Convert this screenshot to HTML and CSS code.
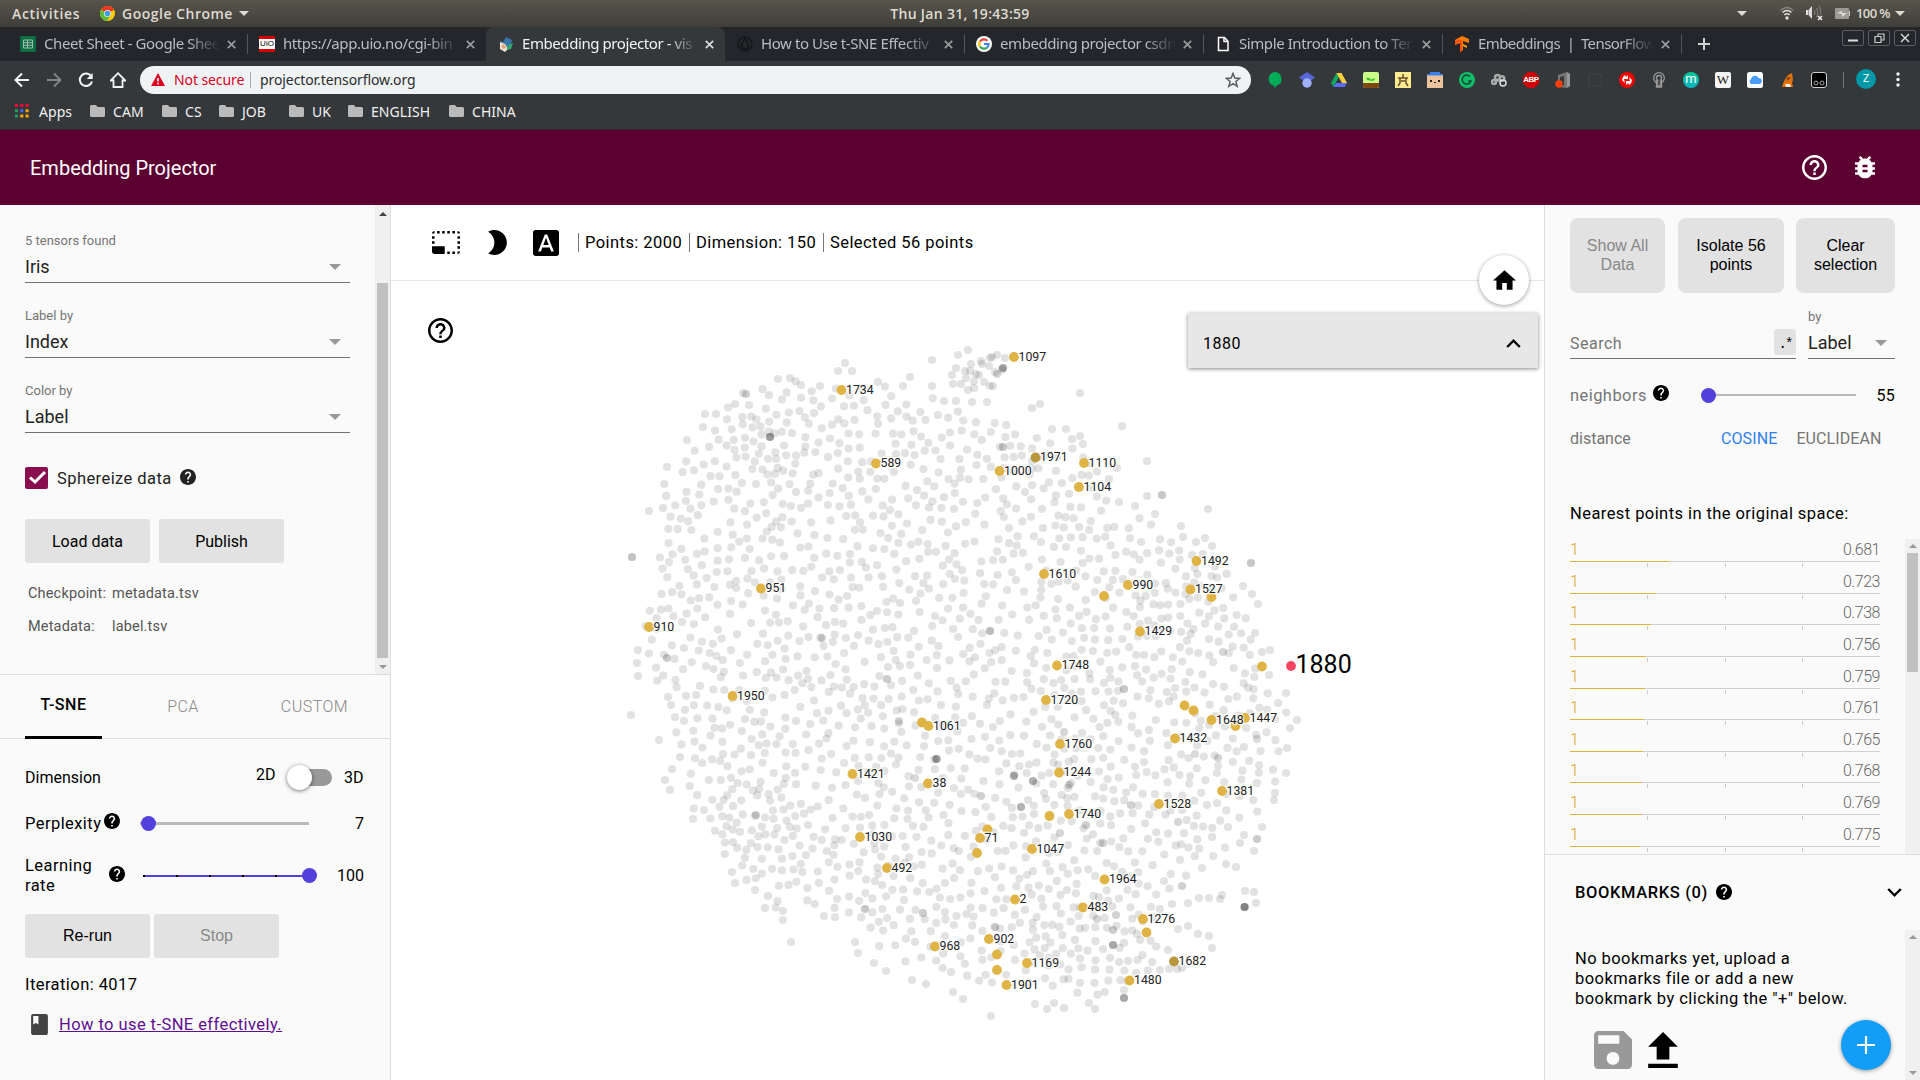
FILE: index.html
```html
<!DOCTYPE html>
<html lang="en">
<head>
<meta charset="utf-8">
<title>Embedding projector</title>
<link rel="stylesheet" href="styles.css">
</head>
<body>
<svg class="sprite" aria-hidden="true">
  <symbol id="help-outline" viewBox="2 2 20 20"><path d="M11 18h2v-2h-2v2zm1-16C6.48 2 2 6.48 2 12s4.48 10 10 10 10-4.48 10-10S17.52 2 12 2zm0 18c-4.41 0-8-3.59-8-8s3.59-8 8-8 8 3.59 8 8-3.59 8-8 8zm0-14c-2.21 0-4 1.79-4 4h2c0-1.1.9-2 2-2s2 .9 2 2c0 2-3 1.75-3 5h2c0-2.25 3-2.5 3-5 0-2.21-1.79-4-4-4z"/></symbol>
  <symbol id="help" viewBox="2 2 20 20"><path d="M12 2C6.48 2 2 6.48 2 12s4.48 10 10 10 10-4.48 10-10S17.52 2 12 2zm1 17h-2v-2h2v2zm2.07-7.75l-.9.92C13.45 12.9 13 13.5 13 15h-2v-.5c0-1.1.45-2.1 1.17-2.83l1.24-1.26c.37-.36.59-.86.59-1.41 0-1.1-.9-2-2-2s-2 .9-2 2H8c0-2.21 1.79-4 4-4s4 1.79 4 4c0 .88-.36 1.68-.93 2.25z"/></symbol>
  <symbol id="bug" viewBox="4 3 16 18"><path d="M20 8h-2.81c-.45-.78-1.07-1.45-1.82-1.96L17 4.41 15.59 3l-2.17 2.17C12.96 5.06 12.49 5 12 5c-.49 0-.96.06-1.41.17L8.41 3 7 4.41l1.62 1.63C7.88 6.55 7.26 7.22 6.81 8H4v2h2.09c-.05.33-.09.66-.09 1v1H4v2h2v1c0 .34.04.67.09 1H4v2h2.81c1.04 1.79 2.97 3 5.19 3s4.15-1.21 5.19-3H20v-2h-2.09c.05-.33.09-.66.09-1v-1h2v-2h-2v-1c0-.34-.04-.67-.09-1H20V8zm-6 8h-4v-2h4v2zm0-4h-4v-2h4v2z"/></symbol>
  <symbol id="folder" viewBox="0 0 15 12"><path d="M0 1.5Q0 0 1.500 0H6l1.500 2H13.500Q15 2 15 3.500V10.500Q15 12 13.500 12H1.500Q0 12 0 10.500z"/></symbol>
  <symbol id="close" viewBox="0 0 9 9"><path d="M.8.800 8.200 8.200M8.200.800.800 8.200" fill="none" stroke="currentColor" stroke-width="1.700"/></symbol>
</svg>

<div class="desktop-bar">
  <span class="activities">Activities</span>
  <svg class="chrome-logo" viewBox="0 0 16 16"><circle cx="8" cy="8" r="8" fill="#fc0"/><path d="M8 8 1.070 4A8 8 0 0 1 14.930 4z" fill="#f1341f"/><path d="M8 8 1.070 4A8 8 0 0 0 7.500 16L11 10z" fill="#5cba3c"/><circle cx="8" cy="8" r="3.800" fill="#eee"/><circle cx="8" cy="8" r="3" fill="#3f9de8"/></svg>
  <span class="app-name">Google Chrome</span>
  <i class="caret"></i>
  <span class="clock">Thu Jan 31, 19:43:59</span>
  <i class="caret tray-caret"></i>
  <svg class="tray wifi" viewBox="0 0 14 14" fill="none"><path d="M.8 4.500Q7-1.500 13.200 4.500" stroke="#88867f" stroke-width="1.500"/><path d="M2.500 6.500Q7 2.500 11.500 6.500M4.300 9Q7 6.500 9.700 9" stroke="#ddd" stroke-width="1.500"/><circle cx="7" cy="12" r="1.700" fill="#ddd"/></svg>
  <svg class="tray volume" viewBox="0 0 17 15"><path d="M0 4h2v5H0zM2.500 4 6 0v13L2.500 9z" fill="#ddd"/><path d="M8 4q2 2.500 0 5M10.500 2q3 4.500 0 9M13 0q3 6 1 9" fill="none" stroke="#88867f"/><path d="m12 10 4 4m0-4-4 4" stroke="#eee" stroke-width="1.600"/></svg>
  <svg class="tray battery" viewBox="0 0 15 11"><rect width="14" height="11" rx="1" fill="#9b9992"/><path d="M14 3h1v5h-1z" fill="#ccc"/><path d="m2 5 5-2v2l5 0-5 4V6z" fill="#ddd"/></svg>
  <span class="percent">100 %</span>
  <i class="caret"></i>
</div>

<div class="tab-strip">
  <div class="tab"><svg class="favicon" viewBox="0 0 16 16"><rect width="16" height="16" rx="1" fill="#0b6e42"/><path d="M3.500 4h9v8h-9zM3.500 6.700h9M3.500 9.300h9M7.500 4v8" fill="none" stroke="#a5b8ad"/></svg><span class="tab-title">Cheet Sheet - Google Shee</span><svg class="x"><use href="#close"/></svg></div>
  <div class="tab no-line"><span class="favicon uio">UiO</span><span class="tab-title">https://app.uio.no/cgi-bin</span><svg class="x"><use href="#close"/></svg></div>
  <div class="tab active"><svg class="favicon" viewBox="0 0 16 16"><path d="M1 4 5 6 8 1l6 3-1 5-5 2z" fill="#3973a8"/><path d="M2 6l5 2 3 5-3 3-5-3z" fill="#f4e4d6"/><path d="m9 10 6-3-2 6-4 1z" fill="#35a56c"/><path d="m3 10 3-2 2 4-3 1z" fill="#e0a37e"/></svg><span class="tab-title">Embedding projector - vis</span><svg class="x"><use href="#close"/></svg></div>
  <div class="tab"><svg class="favicon" viewBox="0 0 16 16" fill="none" stroke="#111315" stroke-width="1.200"><circle cx="8" cy="8" r="7"/><path d="M8 2C6 7 4 8 4.500 11Q8 15 11.500 11C12 8 10 7 8 2z"/></svg><span class="tab-title">How to Use t-SNE Effectiv</span><svg class="x"><use href="#close"/></svg></div>
  <div class="tab"><svg class="favicon" viewBox="0 0 16 16" fill="none" stroke-width="2.200"><circle cx="8" cy="8" r="8" fill="#fff"/><path d="M4 5.500A4.700 4.700 0 0 1 11.300 4.700" stroke="#ea4335"/><path d="M4 5.500A4.700 4.700 0 0 0 4 10.500" stroke="#fbbc05"/><path d="M4 10.500A4.700 4.700 0 0 0 11 11.600" stroke="#34a853"/><path d="M8 8h4.600A4.700 4.700 0 0 1 11 11.600" stroke="#4285f4"/></svg><span class="tab-title">embedding projector csdn</span><svg class="x"><use href="#close"/></svg></div>
  <div class="tab"><svg class="favicon" viewBox="0 0 16 16"><path d="M3.500 1.500h6l3.500 3.700v9.300H3.500zM9 1.500v4h4" fill="none" stroke="#fff" stroke-width="1.500"/></svg><span class="tab-title">Simple Introduction to Ter</span><svg class="x"><use href="#close"/></svg></div>
  <div class="tab"><svg class="favicon" viewBox="0 0 16 16"><path d="m8 0 7 3v4L9 5v9l-3 2V7L1 9V4z" fill="#ff7d00"/><path d="M6 5 8 4v11l-2 1zM1 5l5-2v3L1 9z" fill="#ff4d00"/><path d="m9 8 4 2v2L9 10z" fill="#ffa800"/></svg><span class="tab-title tight">Embeddings &nbsp;|&nbsp; TensorFlow</span><svg class="x"><use href="#close"/></svg></div>
  <svg class="new-tab" viewBox="0 0 12 12"><path d="M6 0v12M0 6h12" stroke="#cfd1d3" stroke-width="2"/></svg>
  <div class="window-buttons">
    <span><svg viewBox="0 0 20 14"><path d="M5 9.500h10" stroke="#ddd" stroke-width="2"/></svg></span>
    <span><svg viewBox="0 0 20 14" fill="none" stroke="#ccc" stroke-width="1.200"><path d="M6 5.500h6v6H6zM9 5V3h6v6h-2.500"/></svg></span>
    <span><svg viewBox="0 0 20 14"><path d="m6 3 8 8m0-8-8 8" stroke="#ddd" stroke-width="1.400"/></svg></span>
  </div>
</div>

<div class="toolbar">
  <svg class="nav" viewBox="0 0 16 16"><path d="M15 8H2M8 1.500 1.500 8 8 14.500" fill="none" stroke="#f1f3f4" stroke-width="2"/></svg>
  <svg class="nav" viewBox="0 0 16 16"><path d="M1 8h13M8 1.500 14.500 8 8 14.500" fill="none" stroke="#85888b" stroke-width="1.800"/></svg>
  <svg class="nav" viewBox="0 0 16 16"><path d="M13.300 4.500A6.200 6.200 0 1 0 14 9.500" fill="none" stroke="#f1f3f4" stroke-width="2"/><path d="M14.700 1v6h-6z" fill="#f1f3f4"/></svg>
  <svg class="nav" viewBox="0 0 16 16"><path d="M3.500 15V8.500H.800L8 1.200l7.200 7.300h-2.700V15z" fill="none" stroke="#f1f3f4" stroke-width="1.800"/></svg>
  <div class="omnibox">
    <svg class="warn" viewBox="0 0 14 13"><path d="M7 0 14 13H0z" fill="#dc0020"/><path d="M6.200 5h1.600v3.500H6.200zM6.200 9.700h1.600v1.500H6.200z" fill="#fff"/></svg>
    <span class="not-secure">Not secure</span>
    <span class="url">projector.tensorflow.org</span>
    <svg class="star" viewBox="0 0 16 16"><path d="m8 1.500 1.800 4.600 4.900.300-3.800 3.100 1.300 4.800L8 11.600l-4.200 2.700 1.300-4.800L1.300 6.400l4.900-.300z" fill="none" stroke="#5b5f63" stroke-width="1.500"/></svg>
  </div>
  <div class="extensions">
    <svg viewBox="0 0 16 16"><path d="M8 0a7 7 0 0 1 2 13.500L7 16v-2.200A7 7 0 0 1 8 0z" fill="#00ac58"/></svg>
    <svg viewBox="0 0 16 16"><path d="m8 0 8 5.500-4 3H4l-4-3z" fill="#5966d8"/><circle cx="8" cy="11" r="4.700" fill="#9fb1ff"/></svg>
    <svg viewBox="0 0 16 16"><path d="M5.500 1 0 11l2.500 4L8 5z" fill="#11a861"/><path d="M5.500 1h5L16 11h-5z" fill="#ffcf40"/><path d="M5 11h11l-2.500 4h-11z" fill="#5b6cff"/></svg>
    <svg viewBox="0 0 16 16"><rect width="16" height="16" rx="2" fill="#ccff8a"/><path d="M0 11h16v3q0 2-2 2H2q-2 0-2-2z" fill="#7b4a10"/><path d="M8 11V8.500Q4 9 3 6q4-1 5 2 1-2 4-1.500-.5 2-4 2.500" fill="#35bc2c"/></svg>
    <svg viewBox="0 0 16 16"><path d="M0 0h16v16H0z" fill="#ffeb8f"/><path d="M8 2v4M3 6h10M5 6v5l-2 3M11 6v5l2 3M6 9h4" fill="none" stroke="#65502e" stroke-width="1.500"/></svg>
    <svg viewBox="0 0 16 16"><path d="M0 3h16v13H0z" fill="#edc39d"/><path d="M3 0h10v3H3zM0 2h16v1.500H0z" fill="#3c82ed"/><path d="M3 8h2v2H3zM11 8h2v2h-2zM7 10h2v1H7z" fill="#222"/></svg>
    <svg viewBox="0 0 16 16"><circle cx="8" cy="8" r="8" fill="#11bf6b"/><path d="M11 4.500A4.500 4.500 0 1 0 12 9H9" fill="none" stroke="#144d35" stroke-width="1.600"/></svg>
    <svg viewBox="0 0 16 16" fill="none" stroke="#aaa" stroke-width="2.400"><circle cx="3" cy="10" r="2"/><circle cx="6.500" cy="5.500" r="2.500"/><circle cx="11" cy="6.500" r="2.300"/><circle cx="12" cy="11" r="3" stroke="#ddd" stroke-width="1.500"/><path d="M4 9 9 8"/></svg>
    <span class="abp">ABP</span>
    <svg viewBox="0 0 16 16"><path d="M6 2 12 0v16l-7-1 4-2V4L5 5v6H3V3z" fill="#777"/><path d="M12 0 15 2v12l-3 2z" fill="#999"/><circle cx="4" cy="12" r="3.700" fill="#ff3e0a"/></svg>
    <svg viewBox="0 0 16 16"><path d="M2 2h12v12H2z" fill="none" stroke="#424447" stroke-dasharray="5 1"/></svg>
    <svg viewBox="0 0 16 16"><circle cx="8" cy="8" r="8" fill="#f30000"/><path d="M3 8q0-3 3-5l1 2 2-2v4H5l1 4M13 8q0 3-3 5l-1-2-2 2V9h4l-1-4" fill="#fff"/></svg>
    <svg viewBox="0 0 16 16" fill="none" stroke="#999" stroke-width="1.300"><circle cx="8" cy="6" r="5.300"/><circle cx="8" cy="6" r="2.500"/><path d="M5.500 8v7h5V8" fill="#888"/><path d="M8 5v8" stroke="#333"/></svg>
    <span class="round-m">m</span>
    <span class="wiki">W</span>
    <svg viewBox="0 0 16 16"><rect width="16" height="16" rx="2.500" fill="#fff"/><path d="M4 12a3 3 0 0 1 0-5 4 4 0 0 1 7.500-1A3 3 0 0 1 12 12z" fill="#499cf5"/></svg>
    <svg viewBox="0 0 16 16"><path d="M9 3 13 1l1 7-1 3 1 4H3l2-6z" fill="#df7208"/><path d="M6 12h5l1 3H7z" fill="#f0ede5"/><path d="m9 5 3 1-5 3z" fill="#743800"/></svg>
    <svg viewBox="0 0 16 16"><rect x=".5" y=".5" width="15" height="15" rx="2.500" stroke="#ccc"/><g fill="none" stroke="#aaa"><circle cx="5" cy="11" r="2"/><circle cx="11" cy="11" r="2"/></g></svg>
  </div>
  <i class="toolbar-line"></i>
  <span class="avatar">Z</span>
  <svg class="menu-dots" viewBox="0 0 4 16" fill="#f1f3f4"><circle cx="2" cy="2" r="1.700"/><circle cx="2" cy="7.500" r="1.700"/><circle cx="2" cy="13" r="1.700"/></svg>
</div>

<div class="bookmark-bar">
  <svg class="apps" viewBox="0 0 14 14"><path d="M0 0h3v3H0zM5.300 0h3v3h-3zM10.600 0h3v3h-3z" fill="#f03"/><path d="M0 5.300h3v3H0zM0 10.600h3v3H0z" fill="#18a05e"/><path d="M5.300 5.300h3v3h-3z" fill="#3a6fff"/><path d="M10.600 5.300h3v3h-3zM5.300 10.600h3v3h-3zM10.600 10.600h3v3h-3z" fill="#fa0"/></svg>
  <span class="bm bm-apps">Apps</span>
  <svg class="folder"><use href="#folder"/></svg><span class="bm bm-cam">CAM</span>
  <svg class="folder"><use href="#folder"/></svg><span class="bm bm-cs">CS</span>
  <svg class="folder"><use href="#folder"/></svg><span class="bm bm-job">JOB</span>
  <svg class="folder"><use href="#folder"/></svg><span class="bm bm-uk">UK</span>
  <svg class="folder"><use href="#folder"/></svg><span class="bm bm-english">ENGLISH</span>
  <svg class="folder"><use href="#folder"/></svg><span class="bm">CHINA</span>
</div>

<header class="app-header">
  <h1>Embedding Projector</h1>
  <svg class="header-help"><use href="#help-outline"/></svg>
  <svg class="header-bug"><use href="#bug"/></svg>
</header>

<main class="app">
  <aside class="left">
    <section class="data-pane">
      <div class="data-content">
        <div class="field"><label>5 tensors found</label><div class="value">Iris<i class="drop"></i></div></div>
        <div class="field"><label>Label by</label><div class="value">Index<i class="drop"></i></div></div>
        <div class="field"><label>Color by</label><div class="value">Label<i class="drop"></i></div></div>
        <div class="sphereize"><span class="checkbox"><svg viewBox="0 0 23 22"><path d="m5 10.500 5 4.500 10-10" fill="none" stroke="#fff" stroke-width="3"/></svg></span><span class="wide">Sphereize data</span><svg class="help"><use href="#help"/></svg></div>
        <div class="buttons data-buttons"><button>Load data</button><button>Publish</button></div>
        <div class="meta"><span>Checkpoint:</span><span>metadata.tsv</span><span>Metadata:</span><span>label.tsv</span></div>
      </div>
      <div class="scrollbar left-scroll"><i class="up dark"></i><b></b><i class="down"></i></div>
    </section>
    <nav class="method-tabs"><span class="selected">T-SNE</span><span class="pca">PCA</span><span class="custom">CUSTOM</span></nav>
    <section class="tsne">
      <div class="row dimension"><span>Dimension</span><span class="two-d">2D</span><span class="toggle"><i></i></span><span class="three-d">3D</span></div>
      <div class="row perplexity"><span class="wide">Perplexity</span><svg class="help"><use href="#help"/></svg><div class="slider"><i class="knob"></i></div><span class="num">7</span></div>
      <div class="row learning"><span class="wide">Learning<br>rate</span><svg class="help"><use href="#help"/></svg><div class="slider full"><i></i><i></i><i></i><i></i><i></i><i class="knob"></i></div><span class="num">100</span></div>
      <div class="buttons run-buttons"><button>Re-run</button><button class="off">Stop</button></div>
      <div class="iteration wide">Iteration: 4017</div>
      <div class="howto wide"><svg viewBox="4 2 16 20"><path d="M18 2H6c-1.100 0-2 .9-2 2v16c0 1.100.9 2 2 2h12c1.100 0 2-.9 2-2V4c0-1.100-.9-2-2-2zM6 4h5v8l-2.500-1.500L6 12V4z" fill="#444"/></svg><a href="#">How to use t-SNE effectively.</a></div>
    </section>
  </aside>

  <section class="center">
    <div class="center-bar wide">
      <svg class="ico-select" viewBox="1 3 22 18"><path d="M23 15h-2v2h2v-2zm0-4h-2v2h2v-2zm0 8h-2v2c1 0 2-1 2-2zM15 3h-2v2h2V3zm8 4h-2v2h2V7zm-2-4v2h2c0-1-1-2-2-2zM3 21h8v-6H1v4c0 1.100.9 2 2 2zM3 7H1v2h2V7zm12 12h-2v2h2v-2zm4-16h-2v2h2V3zm0 16h-2v2h2v-2zM3 3C2 3 1 4 1 5h2V3zm0 8H1v2h2v-2zm8-8H9v2h2V3zM7 3H5v2h2V3z"/></svg>
      <svg class="ico-moon" viewBox="5 2 15 20"><path d="M10 2c-1.820 0-3.530.5-5 1.350C7.990 5.080 10 8.300 10 12s-2.010 6.920-5 8.650C6.470 21.500 8.180 22 10 22c5.520 0 10-4.480 10-10S15.520 2 10 2z"/></svg>
      <svg class="ico-font" viewBox="2 2 20 20"><path d="M9.930 13.500h4.140L12 7.980zM20 2H4c-1.100 0-2 .9-2 2v16c0 1.100.9 2 2 2h16c1.100 0 2-.9 2-2V4c0-1.100-.9-2-2-2zm-4.050 16.500l-1.140-3H9.170l-1.120 3H5.960l5.110-13h1.860l5.110 13h-2.090z"/></svg>
      <span class="stat stat-points">Points: 2000</span><span class="stat stat-dim">Dimension: 150</span><span class="stat">Selected 56 points</span>
    </div>
    <div class="plot">
      <svg id="scatter" viewBox="391 281 1153 799"></svg>
      <svg class="plot-help"><use href="#help-outline"/></svg>
      <div class="home"><svg viewBox="2 3 20 17"><path d="M10 20v-6h4v6h5v-8h3L12 3 2 12h3v8z"/></svg></div>
      <div class="meta-card"><span>1880</span><svg viewBox="0 0 15 9"><path d="m1.200 8 6.300-6.300L13.800 8" fill="none" stroke="#000" stroke-width="2.400"/></svg></div>
    </div>
  </section>

  <aside class="right">
    <section class="inspector">
      <div class="top-buttons"><button class="off">Show All<br>Data</button><button>Isolate 56<br>points</button><button>Clear<br>selection</button></div>
      <div class="search-row"><div class="search"><span>Search</span><b>.*</b></div><div class="by"><label>by</label><div>Label<i class="drop"></i></div></div></div>
      <div class="neighbors"><span class="wide">neighbors</span><svg class="help"><use href="#help"/></svg><div class="slider"><i class="knob"></i></div><b>55</b></div>
      <div class="distance"><span>distance</span><a class="cosine">COSINE</a><a>EUCLIDEAN</a></div>
      <p class="nearest wide">Nearest points in the original space:</p>
      <div class="list-wrap"><div class="list" id="neighbor-list"></div><div class="scrollbar list-scroll"><i class="up"></i><b></b></div></div>
    </section>
    <section class="bookmarks">
      <div class="bookmarks-head"><span>BOOKMARKS (0)</span><svg class="help"><use href="#help"/></svg><svg class="chev" viewBox="0 0 15 9"><path d="m1.200 1 6.300 6.300L13.800 1" fill="none" stroke="#000" stroke-width="2.400"/></svg></div>
      <div class="bookmarks-body">
        <div class="bookmarks-content"><p class="wide">No bookmarks yet, upload a<br>bookmarks file or add a new<br>bookmark by clicking the "+" below.</p>
          <div class="file-icons"><svg class="save" viewBox="3 3 18 18"><path d="M17 3H5c-1.110 0-2 .9-2 2v14c0 1.100.89 2 2 2h14c1.100 0 2-.9 2-2V7l-4-4zm-5 16c-1.660 0-3-1.340-3-3s1.340-3 3-3 3 1.340 3 3-1.340 3-3 3zm3-10H5V5h10v4z"/></svg><svg class="upload" viewBox="5 3 14 17"><path d="M9 16h6v-6h4l-7-7-7 7h4zm-4 2h14v2H5z"/></svg><span class="add"><svg viewBox="0 0 18 18"><path d="M9 0v18M0 9h18" stroke="#fff" stroke-width="2.200"/></svg></span></div>
        </div>
        <div class="scrollbar"><i class="up"></i><b class="none"></b><i class="down"></i></div>
      </div>
    </section>
  </aside>
</main>
<script src="script.js"></script>
</body>
</html>
```
FILE: styles.css
```css
* { box-sizing: border-box; }
body { margin: 0; width: 1920px; height: 1080px; overflow: hidden; display: flex; flex-direction: column; background: #fff; color: #000; font-family: Roboto, sans-serif; font-size: 16px; }
svg { display: block; flex: none; }
button { border: 0; padding: 0; background: #e2e2e2; color: #000; font: 16px Roboto, sans-serif; }
.sprite { width: 0; height: 0; position: absolute; }
.wide { font-size: 16.500px; letter-spacing: .43px; }

/* desktop bar */
.desktop-bar { height: 27px; flex: none; display: flex; align-items: center; position: relative; padding: 0 15px 1px 12px; background: linear-gradient(#57544b, #3f3e39); color: #dfdbd2; font: 600 14px "Open Sans", sans-serif; }
.activities { width: 88px; letter-spacing: .7px; }
.chrome-logo { width: 15px; height: 15px; margin-right: 7px; }
.app-name { width: 112px; white-space: nowrap; letter-spacing: .5px; }
.caret { border: 5px solid transparent; border-top-color: #dfdbd2; border-bottom: 0; margin-left: 5px; }
.clock { position: absolute; left: 0; right: 0; text-align: center; letter-spacing: .3px; }
.tray-caret { margin-left: auto; }
.tray { width: 14px; height: 14px; }
.wifi { margin-left: 33px; }
.volume { width: 17px; height: 15px; margin-left: 12px; }
.battery { width: 15px; height: 11px; margin-left: 12px; }
.percent { margin-left: 6px; font-size: 13px; width: 34px; letter-spacing: -.6px; white-space: nowrap; }

/* browser chrome */
.tab-strip { height: 34px; flex: none; display: flex; padding-left: 8px; background: #24262b; font: 15px "Noto Sans", sans-serif; color: #b9bcc0; }
.tab { width: 239px; display: flex; align-items: center; padding: 0 9px 0 12px; position: relative; flex: none; }
.tab::after { content: ""; position: absolute; right: -1px; top: 7px; width: 1px; height: 20px; background: #54575b; }
.no-line::after, .active::after { display: none; }
.active { background: #35383b; border-radius: 8px 8px 0 0; color: #f1f3f4; }
.favicon { width: 16px; height: 16px; margin-right: 8px; flex: none; }
.uio { background: linear-gradient(#d00 0 20%, #fff 20% 80%, #d00 80%); color: #000; font: 8px/16px "Liberation Sans", sans-serif; text-align: center; }
.tab-title { flex: 1; overflow: hidden; white-space: nowrap; letter-spacing: -.42px; padding-bottom: 2px; mask-image: linear-gradient(90deg, #000 82%, transparent 100%); }
.tight { letter-spacing: -.6px; }
.x { width: 9px; height: 9px; margin: 0 2px 0 7px; color: #9a9da0; }
.active .x { color: #d8dadc; }
.new-tab { width: 12px; height: 12px; margin: 11px 0 0 17px; }
.window-buttons { display: flex; gap: 4px; margin: 3px 4px 0 auto; }
.window-buttons span { width: 22px; height: 16px; border: 1px solid #5b5d60; border-radius: 2px; }
.window-buttons svg { width: 20px; height: 14px; }
.toolbar { height: 38px; flex: none; display: flex; align-items: center; background: #35383b; padding-left: 14px; }
.nav { width: 16px; height: 16px; margin-right: 16px; }
.omnibox { width: 1111px; height: 28px; margin-left: -2px; border-radius: 14px; background: #eff3f4; display: flex; align-items: center; padding: 0 10px 1px 11px; font: 14px "Noto Sans", sans-serif; color: #2b2d30; }
.warn { width: 14px; height: 13px; margin-right: 9px; }
.not-secure { color: #dc0020; width: 77px; border-right: 1px solid #aaa; line-height: 16px; white-space: nowrap; letter-spacing: -.1px; }
.url { margin-left: 9px; letter-spacing: -.09px; }
.star { width: 16px; height: 16px; margin-left: auto; }
.extensions { display: flex; gap: 16px; margin-left: 16px; }
.extensions > * { width: 16px; height: 16px; text-align: center; }
.abp { background: #d00000; clip-path: polygon(30% 0, 70% 0, 100% 30%, 100% 70%, 70% 100%, 30% 100%, 0 70%, 0 30%); color: #fff; font: 700 8px/16px "Liberation Sans", sans-serif; letter-spacing: -.5px; }
.round-m { border-radius: 50%; background: linear-gradient(#08c695, #0bb4c4); color: #fff; font: 13px/14px Roboto, sans-serif; }
.wiki { border-radius: 2px; background: #f6f6f6; color: #222; font: 13px/16px "Liberation Serif", serif; }
.toolbar-line { width: 1px; height: 16px; background: #707376; margin-left: 16px; }
.avatar { width: 20px; height: 20px; border-radius: 50%; background: #0097a7; color: #fff; font: 11px/20px Roboto, sans-serif; text-align: center; margin: -2px 0 0 12px; }
.menu-dots { width: 4px; height: 16px; margin-left: 20px; }
.bookmark-bar { height: 31px; flex: none; display: flex; align-items: center; background: #35383b; border-bottom: 1px solid #2a2c2e; padding: 0 15px 6px; font: 14px "Noto Sans", sans-serif; color: #f0f1f2; }
.apps { width: 14px; height: 14px; margin-right: 10px; }
.folder { width: 15px; height: 12px; margin-right: 8px; fill: #bababb; }
.bm { white-space: nowrap; letter-spacing: .05px; }
.bm-apps { width: 51px; } .bm-cam { width: 49px; } .bm-cs { width: 34px; } .bm-job { width: 47px; } .bm-uk { width: 36px; } .bm-english { width: 78px; }

/* application header */
.app-header { height: 75px; flex: none; display: flex; align-items: center; background: #5c0031; padding: 0 45px 0 30px; fill: #fff; }
.app-header h1 { margin: 0; font: 400 20px Roboto, sans-serif; color: #fff; flex: 1; }
.header-help { width: 25px; height: 25px; margin-right: 28px; }
.header-bug { width: 20px; height: 22.500px; }

.app { flex: 1; min-height: 0; display: flex; }
.left { width: 391px; background: #fafafa; border-right: 1px solid #ddd; display: flex; flex-direction: column; }
.data-pane { height: 469px; display: flex; }
.data-content { width: 375px; padding: 3px 25px 0; }
.scrollbar { width: 15px; background: #f0f0f0; display: flex; flex-direction: column; align-items: center; padding: 5px 0; }
.scrollbar i { border: 4px solid transparent; flex: none; }
.scrollbar .up { border-bottom-color: #999; border-top: 0; margin-bottom: 5px; }
.scrollbar .dark { border-bottom-color: #444; }
.scrollbar .down { border-top-color: #999; border-bottom: 0; margin-top: auto; }
.scrollbar b { width: 11px; height: 119px; background: #c0c0c0; }
.scrollbar .none { display: none; }
.left-scroll { padding-top: 7px; }
.left-scroll b { height: 375px; margin-top: 62px; }
.field { height: 75px; border-bottom: 1px solid #707070; display: flex; flex-direction: column; justify-content: flex-end; }
.field label { font-size: 13px; line-height: 20px; margin-bottom: 2px; color: #757575; }
.value { height: 29px; line-height: 27px; font-size: 18px; display: flex; align-items: center; justify-content: space-between; padding: 0 9px 2px 0; color: #222; }
.drop { border: 6px solid transparent; border-top-color: #999; border-bottom: 0; }
.help { width: 16px; height: 16px; }
.sphereize { margin-top: 34px; height: 22px; display: flex; align-items: center; color: #222; fill: #222; }
.sphereize .checkbox { width: 23px; height: 22px; border-radius: 2px; background: #880e4f; margin-right: 9px; }
.sphereize .help { margin: -3px 0 0 8px; }
.buttons { display: flex; gap: 9px; height: 44px; }
.buttons button { width: 125px; border-radius: 3px; }
.data-buttons { margin-top: 30px; }
.meta { display: grid; grid-template-columns: 84px auto; grid-auto-rows: 33px; align-items: center; padding: 14px 0 0 3px; font-size: 14.500px; letter-spacing: .17px; color: #555; }
.method-tabs { height: 65px; border: solid #ddd; border-width: 1px 0; display: flex; padding-left: 25px; line-height: 63px; font-weight: 300; color: #888; letter-spacing: .5px; }
.method-tabs .selected { width: 77px; text-align: center; line-height: 60px; border-bottom: 3px solid #000; font-weight: 500; color: #000; margin-bottom: -1px; }
.pca { width: 162px; text-align: center; }
.custom { width: 101px; text-align: center; }
.tsne { padding: 15px 26px 0 25px; }
.row { height: 46px; display: flex; align-items: center; }
.two-d { margin: -5px 11px 0 auto; width: 20px; }
.toggle { width: 45px; height: 17px; display: flex; align-items: center; position: relative; }
.toggle::before { content: ""; width: 33px; height: 17px; border-radius: 9px; background: #999; margin-left: 12px; }
.toggle i { position: absolute; left: 0; width: 25px; height: 25px; border-radius: 50%; background: #fff; box-shadow: 0 1px 4px #0008; }
.three-d { margin-left: 12px; width: 20px; }
.perplexity { height: 47px; }
.perplexity .help { margin: -5px 0 0 3px; }
.slider { position: relative; height: 3px; background: #bababa; display: flex; }
.knob { position: absolute; left: 1px; top: -6px; width: 15px; height: 15px; border-radius: 50%; background: #5241dc; }
.perplexity .slider { width: 169px; margin-left: auto; }
.num { width: 55px; text-align: right; }
.learning { height: 58px; line-height: 20px; }
.learning .help { margin: -5px 0 0 17px; }
.learning .slider { width: 166px; height: 2px; background: #5241dc; margin-left: auto; }
.learning .slider i:not(.knob) { width: 2px; margin-right: 31px; background: #000; }
.learning .knob { left: auto; right: -8px; top: -7px; }
.run-buttons { gap: 4px; margin-top: 9px; }
.run-buttons button, .top-buttons button { font: 16px "Liberation Sans", sans-serif; }
button.off { color: #888; }
.iteration { margin-top: 17px; line-height: 20px; }
.howto { margin: 18px 0 0 6px; display: flex; align-items: center; height: 22px; }
.howto svg { width: 17px; height: 21px; margin-right: 11px; }
.howto a { color: #5f0d91; }

/* centre */
.center { width: 1153px; display: flex; flex-direction: column; }
.center-bar { height: 76px; border-bottom: 1px solid #e6e6e6; display: flex; align-items: center; padding-left: 41px; }
.ico-select { width: 28px; height: 23px; margin-right: 28px; }
.ico-moon { width: 19px; height: 25px; margin-right: 26px; }
.ico-font { width: 26px; height: 26px; margin-right: 19px; }
.stat { border-left: 1px solid #777; padding-left: 6px; line-height: 19px; white-space: nowrap; }
.stat-points { width: 111px; } .stat-dim { width: 134px; }
.plot { flex: 1; position: relative; }
#scatter { position: absolute; inset: 0; width: 1153px; height: 799px; }
#scatter text { font: 12.300px Roboto, sans-serif; fill: #222; stroke: #fff; stroke-width: 2.500px; stroke-opacity: .8; paint-order: stroke; }
#scatter .big { font-size: 25px; fill: #000; }
.plot-help { position: absolute; left: 37px; top: 37px; width: 25px; height: 25px; }
.home { position: absolute; right: 15px; top: -26px; width: 50px; height: 50px; border-radius: 50%; background: #fff; box-shadow: 0 1px 4px #0006; display: grid; place-items: center; }
.home svg { width: 23px; height: 20px; }
.meta-card { position: absolute; left: 797px; top: 32px; width: 350px; height: 55px; background: #e7e7e7; box-shadow: 0 1px 4px #0007; display: flex; align-items: center; justify-content: space-between; padding: 6px 17px 0 15px; letter-spacing: .5px; }
.meta-card svg { width: 15px; height: 9px; }

/* right */
.right { width: 376px; background: #fafafa; border-left: 1px solid #ddd; display: flex; flex-direction: column; }
.inspector { height: 650px; padding: 13px 0 0 25px; display: flex; flex-direction: column; border-bottom: 1px solid #ddd; }
.top-buttons { height: 75px; display: flex; gap: 13px; }
.top-buttons button { width: 95px; border-radius: 8px; line-height: 19px; padding-bottom: 2px; }
.top-buttons button:nth-child(2) { width: 106px; }
.top-buttons button:nth-child(3) { width: 99px; margin-left: -1px; }
.search-row { display: flex; gap: 12px; margin-top: 12px; height: 54px; align-items: flex-end; }
.search { width: 226px; height: 30px; border-bottom: 1px solid #707070; display: flex; justify-content: space-between; color: #757575; line-height: 29px; letter-spacing: .5px; }
.search b { width: 22px; height: 26px; border-radius: 3px; background: #e2e2e2; color: #000; font: 14px/26px "Liberation Mono", monospace; letter-spacing: -2px; text-align: center; padding-top: 2px; }
.by { width: 87px; border-bottom: 1px solid #707070; }
.by label { display: block; font-size: 13px; color: #757575; line-height: 20px; }
.by div { display: flex; align-items: center; justify-content: space-between; padding-right: 8px; font-size: 18px; line-height: 31px; color: #222; }
.neighbors { height: 44px; margin-top: 14px; padding-right: 25px; display: flex; align-items: center; color: #757575; fill: #000; }
.neighbors .help { margin: -5px 0 0 6px; }
.neighbors .slider { width: 148px; height: 2px; margin-left: auto; }
.neighbors .knob { left: -7px; top: -6px; }
.neighbors b { width: 39px; text-align: right; font-weight: 400; color: #000; letter-spacing: .3px; }
.distance { height: 42px; display: flex; align-items: center; color: #757575; }
.distance span { width: 151px; }
.distance a { margin-right: 19px; letter-spacing: .1px; }
.distance .cosine { color: #2f80ed; }
.nearest { margin: 44px 0 0; line-height: 22px; }
.list-wrap { flex: 1; min-height: 0; margin-top: 14px; display: flex; justify-content: space-between; overflow: hidden; }
.list { width: 310px; }
.neighbor { height: 31.650px; display: flex; flex-direction: column; font-weight: 300; color: #666; }
.neighbor div:first-child { height: 22px; line-height: 21px; display: flex; justify-content: space-between; }
.neighbor span { letter-spacing: -.45px; }
.neighbor b { font-weight: 300; color: #d9a520; }
.bar { height: 1px; background: #d0d0d0; }
.bar i { display: block; height: 1px; background: #e0b53f; }
.ticks { display: flex; justify-content: space-evenly; height: 4px; margin-top: 1px; }
.ticks i { width: 1px; background: #ccc; }
.bookmarks { flex: 1; display: flex; flex-direction: column; }
.bookmarks-head { height: 75px; display: flex; align-items: center; padding: 0 18px 0 30px; font-weight: 500; }
.bookmarks-head span { font-size: 16.500px; letter-spacing: .62px; }
.bookmarks-head .help { margin-left: 8px; margin-top: -2px; }
.chev { width: 15px; height: 9px; margin-left: auto; }
.bookmarks-body { flex: 1; display: flex; }
.bookmarks-content { flex: 1; padding-left: 30px; position: relative; }
.bookmarks p { margin: 19px 0 0; line-height: 20px; white-space: nowrap; }
.file-icons { display: flex; align-items: center; margin: 22px 0 0 19px; }
.save { width: 38px; height: 38px; fill: #999; }
.upload { width: 30px; height: 36px; margin-left: 16px; }
.add { position: absolute; right: 14px; bottom: 10px; width: 50px; height: 50px; border-radius: 50%; background: #119df8; box-shadow: 0 1px 4px #0006; display: grid; place-items: center; }
.add svg { width: 18px; height: 18px; }
```
FILE: script.js
```js
const NS = "http://www.w3.org/2000/svg";
const svg = document.getElementById("scatter");

function dot(x, y, r, fill) {
  const c = document.createElementNS(NS, "circle");
  c.setAttribute("cx", x); c.setAttribute("cy", y); c.setAttribute("r", r);
  c.setAttribute("fill", fill);
  svg.appendChild(c);
}
function label(x, y, text, cls) {
  const t = document.createElementNS(NS, "text");
  t.setAttribute("x", x); t.setAttribute("y", y);
  if (cls) t.setAttribute("class", cls);
  t.textContent = text;
  svg.appendChild(t);
}

// Boundary of the dense part of the embedding, clockwise.
const hull = [[667,467],[660,500],[690,452],[720,414],[743,393],[778,379],[838,385],[878,384],[905,382],[935,392],[960,400],[990,405],[1010,425],[1050,440],[1080,450],[1100,475],[1145,510],[1170,540],[1212,550],[1240,590],[1250,620],[1255,660],[1278,693],[1290,720],[1282,748],[1280,773],[1270,793],[1255,815],[1240,850],[1200,868],[1172,890],[1150,930],[1165,960],[1125,985],[1095,1005],[1070,990],[1030,985],[991,985],[953,975],[912,965],[880,950],[858,925],[824,912],[783,915],[765,900],[735,883],[721,845],[695,815],[683,790],[680,765],[672,740],[672,697],[644,670],[640,640],[648,615],[659,583],[657,553],[660,530]];

const strays = [[667,467],[649,511],[687,440],[705,414],[716,414],[703,427],[743,393],[778,379],[790,378],[838,371],[845,363],[852,371],[878,382],[910,377],[903,386],[932,360],[932,386],[820,386],[801,385],[958,355],[968,350],[990,386],[1032,408],[1040,404],[1080,393],[1052,429],[1066,429],[1072,439],[1080,436],[1122,426],[1083,444],[1147,461],[1147,496],[1117,468],[1109,479],[1135,506],[1119,502],[1208,509],[1181,526],[1155,514],[1183,537],[1205,538],[1212,546],[1196,542],[1258,604],[1252,594],[1243,586],[1255,633],[1270,650],[1262,652],[1269,675],[1286,693],[1278,703],[1297,720],[1290,728],[1287,748],[1286,773],[1275,793],[1274,800],[1262,827],[1244,835],[1240,843],[1254,851],[1228,827],[1226,864],[1236,867],[1202,868],[1256,903],[1254,892],[1245,891],[1222,895],[1209,898],[1220,899],[1199,898],[1188,903],[1172,904],[1188,926],[1178,929],[1198,934],[1209,936],[1212,948],[1168,950],[1160,970],[1169,969],[1177,969],[1182,968],[1124,990],[1095,1009],[1089,1003],[1064,1008],[1054,1003],[1047,1009],[1035,1004],[991,1016],[963,999],[953,992],[926,984],[912,980],[886,971],[874,963],[858,953],[855,942],[791,942],[824,916],[835,917],[783,920],[783,911],[765,908],[755,890],[735,883],[732,872],[693,819],[670,790],[665,780],[672,769],[659,740],[680,757],[668,697],[671,705],[675,717],[638,676],[637,663],[638,650],[631,715]];

// The small group beside 1097.
const cluster = [[997,355],[992,357],[1005,358],[981,361],[971,364],[956,368],[965,371],[970,371],[976,374],[952,375],[989,366],[982,364],[1002,370],[953,384],[961,384],[966,378],[974,381],[984,382],[993,386],[974,388],[968,390],[944,401],[956,401],[972,402],[987,402],[979,375],[995,372],[990,358]];

function inside(x, y) {
  let hit = false;
  for (let i = 0, j = hull.length - 1; i < hull.length; j = i++) {
    const [xi, yi] = hull[i], [xj, yj] = hull[j];
    if ((yi > y) !== (yj > y) && x < (xj - xi) * (y - yi) / (yj - yi) + xi) hit = !hit;
  }
  return hit;
}
let seed = 1880;
function rnd() {
  seed = (seed * 1664525 + 1013904223) >>> 0;
  return seed / 4294967296;
}
function nearest(pts, x, y) {
  let d = 1e9;
  for (const p of pts) {
    const q = (p[0] - x) ** 2 + (p[1] - y) ** 2;
    if (q < d) d = q;
  }
  return d;
}

const pts = strays.concat(cluster);
while (pts.length < 1820) {
  let best = null, bestD = -1;
  for (let k = 0; k < 7; k++) {
    let x, y;
    do { x = 637 + rnd() * 660; y = 350 + rnd() * 666; } while (!inside(x, y));
    const d = nearest(pts, x, y);
    if (d > bestD) { bestD = d; best = [x, y]; }
  }
  pts.push(best);
}
// Denser neighbourhoods: centre x, centre y, radii, count, closest spacing.
[[765,440,48,36,16,6],[755,815,48,36,18,6],[1185,600,45,40,16,5.500],[1090,940,60,45,14,5.500],[1060,770,22,40,8,5]].forEach(([cx, cy, rx, ry, n, gap]) => {
  let tries = 0;
  for (let i = 0; i < n && tries < 3000; tries++) {
    const a = rnd() * 6.283, r = Math.sqrt(rnd());
    const x = cx + Math.cos(a) * r * rx, y = cy + Math.sin(a) * r * ry;
    if (nearest(pts, x, y) > gap * gap) { pts.push([x, y]); i++; }
  }
});
pts.forEach(p => dot(p[0].toFixed(1), p[1].toFixed(1), 4.100, "rgba(0,0,0,.115)"));

// Overlapping points read darker.
[[746,394,.14],[770,437,.35],[1003,368,.3],[997,374,.12],[1003,447,.16],[1162,495,.18],[632,557,.2],[1251,563,.18],[990,631,.22],[822,638,.12],[667,658,.16],[1223,652,.12],[887,679,.16],[1124,689,.18],[899,721,.12],[1064,732,.12],[936.5,759,.36],[1195,754,.1],[1218,758,.12],[1257,739,.1],[915,778,.1],[1014,776,.26],[1033,781,.26],[1069,785,.14],[981,796,.14],[1021,807,.26],[1131,805,.14],[756,815,.14],[1178,822,.12],[1086,825,.14],[1060,833,.12],[1103,843,.14],[1257,839,.16],[1244.600,907,.45],[1182,886,.14],[865,909,.18],[923,913,.16],[995,927,.18],[1097,919,.12],[1116,915,.14],[1113,930,.16],[1113,945,.3],[1124,998,.3]].forEach(([x, y, a]) => {
  dot(x, y, 4.1, `rgba(0,0,0,${a + .04})`);
});

const gold = "#e0b444", dark = "#b9973c";
const named = [[1014,357,1097],[841.5,390,1734],[876,463.5,589],[1035.500,457.500,1971,1],[999.5,471,1000],[1084,463,1110],[1079,487,1104],[1196.500,561,1492],[1044,574,1610],[1128,585,990],[1190.500,589.500,1527],[761,588.500,951],[649,627,910],[1140,631.500,1429],[1057,665.500,1748],[732.500,696,1950],[1046,700,1720],[928.500,726,1061],[1211.500,720,1648],[1245,718,1447],[1175,738.500,1432],[1060,744,1760],[1059,772.500,1244],[852.500,774,1421],[928,783.500,38],[1222,791,1381],[1159,804,1528],[1069,814,1740],[860,837,1030],[980,838,71],[1032,849,1047],[887,868,492],[1104.500,879.500,1964],[1015,899.500,2],[1083,907.500,483],[1143,919,1276],[989,939,902],[935,946.500,968],[1027,963,1169],[1174,961.500,1682,1],[1006.500,985,1901],[1129.500,980.500,1480]];
[[1104,596],[1211.500,597],[1262,666.500],[922,722.500],[1184.500,705.500],[1193.500,710.500],[1235.500,726],[1049.500,816],[987.500,829.500],[977,853],[1146.500,932.500],[997,954.500],[997,970]].forEach(p => dot(p[0], p[1], 4.9, gold));
named.forEach(([x, y, n, d]) => dot(x, y, 4.9, d ? dark : gold));
dot(1291, 666, 4.900, "#fb4460");
named.forEach(([x, y, n]) => label(x + 4.5, y + 3.800, n));
label(1295.500, 672.500, "1880", "big");

const sims = ["0.681","0.723","0.738","0.756","0.759","0.761","0.765","0.768","0.769","0.775"];
const widths = [99, 86, 81, 76, 75, 74, 73, 72, 72, 70];
document.getElementById("neighbor-list").innerHTML = sims.map((s, i) =>
  `<div class="neighbor"><div><b>1</b><span>${s}</span></div><div class="bar"><i style="width:${widths[i]}px"></i></div><div class="ticks"><i></i><i></i><i></i></div></div>`).join("");
```
